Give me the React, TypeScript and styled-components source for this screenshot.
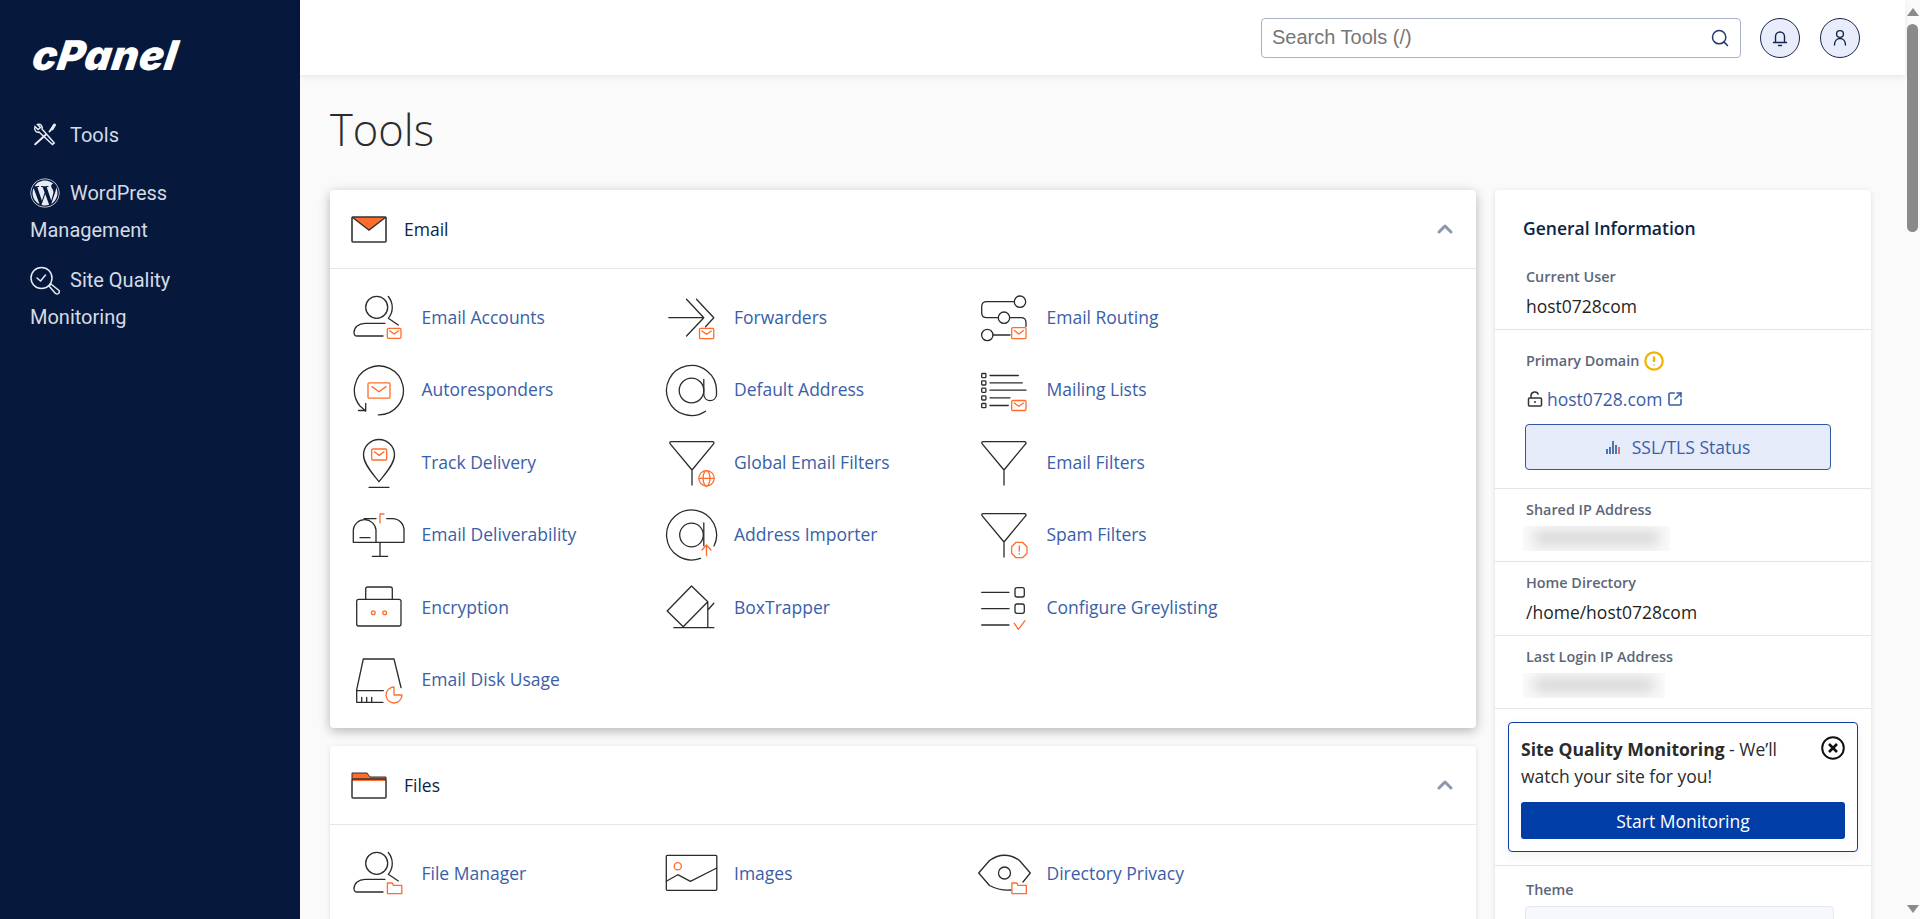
// App.tsx
import React from 'react';
import styled, { createGlobalStyle } from 'styled-components';
import { FaWordpress } from 'react-icons/fa';
import { ChevronUp, Search, SquareArrowOutUpRight } from 'lucide-react';

const GlobalStyle = createGlobalStyle`
  html, body {
    margin: 0;
    height: 100%;
    overflow: hidden;
    background: #fafafa;
    font-family: "Open Sans", "Liberation Sans", sans-serif;
  }
  #root { height: 100%; }
  * { box-sizing: border-box; }
`;

const INK = '#2b2b2b';
const ORANGE = '#ff6c2c';

const Page = styled.div`
  display: flex;
  height: 919px;
  overflow: hidden;
`;

const Sidebar = styled.aside`
  flex: 0 0 300px;
  background: #06193c;
  padding: 35px 0 0 30px;
  color: #d5dbe6;
  font-family: Roboto, "Liberation Sans", sans-serif;
`;

const Logo = styled.div`
  font-family: Inter, "Liberation Sans", sans-serif;
  font-weight: 900;
  font-style: italic;
  font-size: 41px;
  line-height: 40px;
  letter-spacing: 0.6px;
  color: #fff;
  margin-bottom: 41.5px;
  transform: skewX(-9deg);
  transform-origin: left bottom;
`;

const NavItem = styled.div<{ $gap: number }>`
  font-size: 20px;
  line-height: 37px;
  width: 200px;
  margin-bottom: ${(p) => p.$gap}px;
  svg {
    width: 30px;
    height: 30px;
    margin-right: 10px;
    vertical-align: -8px;
    color: #e8ecf2;
  }
`;

const Main = styled.div`
  flex: 1;
  min-width: 0;
  display: flex;
  flex-direction: column;
`;

const TopBar = styled.header`
  flex: 0 0 75px;
  background: #fff;
  box-shadow: 0 2px 6px rgba(0, 0, 0, 0.08);
  display: flex;
  align-items: center;
  justify-content: flex-end;
  gap: 20px;
  padding: 0 45px 0 0;
  position: relative;
`;

const SearchBox = styled.div`
  width: 480px;
  height: 40px;
  border: 1px solid #a9b2c9;
  border-radius: 4px;
  display: flex;
  align-items: center;
  padding: 0 10px;
  background: #fff;
  margin-right: -1px;
  color: #24386e;
`;

const SearchInput = styled.input`
  flex: 1;
  border: 0;
  outline: 0;
  min-width: 0;
  height: 100%;
  padding: 0;
  font-family: "Liberation Sans", Arial, sans-serif;
  font-size: 20px;
  background: transparent;
  &::placeholder {
    color: #767676;
    opacity: 1;
  }
`;

const RoundButton = styled.button`
  width: 40px;
  height: 40px;
  padding: 0;
  border-radius: 50%;
  background: #e9edfb;
  border: 1px solid #16264f;
  display: flex;
  align-items: center;
  justify-content: center;
`;

const Content = styled.main`
  flex: 1;
  min-height: 0;
  overflow: hidden;
  padding: 0 34px 0 30px;
`;

const Title = styled.h1`
  margin: 28px 0 33px;
  font-weight: 300;
  font-size: 43.5px;
  line-height: 54px;
  color: #2b2b2b;
`;

const Columns = styled.div`
  display: grid;
  grid-template-columns: 1146px 376px;
  gap: 19px;
  align-items: start;
`;

const Stack = styled.div`
  display: flex;
  flex-direction: column;
  gap: 18px;
`;

const Card = styled.section<{ $raised?: boolean }>`
  background: #fff;
  border-radius: 4px;
  box-shadow: ${(p) =>
    p.$raised ? '0 3px 12px rgba(0, 0, 0, 0.28)' : '0 1px 5px rgba(0, 0, 0, 0.12)'};
`;

const CardHeader = styled.div`
  height: 79px;
  display: flex;
  align-items: center;
  gap: 17px;
  padding: 0 19px 0 21px;
  border-bottom: 1px solid #e3e8ef;
  font-size: 17.5px;
  color: #0b2447;
`;

const CardTitle = styled.span`
  flex: 1;
`;

const ToolGrid = styled.div`
  display: grid;
  grid-template-columns: repeat(3, 312.5px);
  grid-auto-rows: 72.5px;
  padding: 11.6px 20px 12.9px;
`;

const ToolLink = styled.a`
  display: flex;
  align-items: center;
  gap: 15.5px;
  font-size: 17.5px;
  color: #3a5ea8;
  svg {
    flex: 0 0 56px;
    width: 56px;
    height: 56px;
    fill: none;
    stroke: ${INK};
    stroke-width: 1.3;
    stroke-linecap: round;
    stroke-linejoin: round;
  }
`;

const InfoHeading = styled.h2`
  margin: 0;
  padding: 26px 28px 0;
  font-size: 17.5px;
  line-height: 24px;
  font-weight: 600;
  color: #0b2447;
`;

const InfoSection = styled.div<{ $top?: number; $bottom?: number }>`
  padding: ${(p) => p.$top ?? 12}px 31px ${(p) => p.$bottom ?? 10.5}px;
  border-bottom: 1px solid #e4e4e4;
`;

const Label = styled.div`
  display: flex;
  align-items: center;
  gap: 5px;
  min-height: 18px;
  font-size: 14.4px;
  line-height: 18px;
  font-weight: 600;
  color: #5d6679;
`;

const Value = styled.div`
  margin-top: 8px;
  font-size: 17.5px;
  line-height: 24px;
  color: #1f1f1f;
`;

const DomainRow = styled.div`
  margin-top: 16px;
  display: flex;
  align-items: center;
  gap: 4px;
  height: 24px;
  font-size: 17.5px;
  color: #3a5ea8;
  margin-left: 1px;
`;

const OutlineButton = styled.button`
  margin-top: 13px;
  width: 306px;
  height: 46px;
  margin-left: -1px;
  display: flex;
  align-items: center;
  justify-content: center;
  gap: 10px;
  background: #e6ebfa;
  border: 1px solid #2f57a5;
  border-radius: 4px;
  font-family: inherit;
  font-size: 17.5px;
  color: #3a5ea8;
`;

const Blurred = styled.div<{ $w: number; $h: number }>`
  margin: 7px 0 0 -3px;
  width: ${(p) => p.$w}px;
  height: ${(p) => p.$h}px;
  background: #fafafa;
  overflow: hidden;
  display: flex;
  align-items: center;
  justify-content: center;
`;

const BlurBar = styled.div`
  width: 85%;
  height: 55%;
  background: #d4d4d4;
  filter: blur(7px);
`;

const BannerWrap = styled.div`
  padding: 13px;
  border-bottom: 1px solid #e4e4e4;
`;

const Banner = styled.div`
  border: 1px solid #0b3d9e;
  border-radius: 4px;
  padding: 13px 12px 12px;
  box-shadow: 0 4px 14px rgba(0, 0, 0, 0.06);
`;

const BannerTop = styled.div`
  display: flex;
  justify-content: space-between;
  align-items: flex-start;
`;

const BannerText = styled.div`
  width: 270px;
  font-size: 17.5px;
  line-height: 27px;
  color: #2b2b2b;
  b { font-weight: 700; }
`;

const PrimaryButton = styled.button`
  margin-top: 12px;
  width: 100%;
  height: 37px;
  background: #003da6;
  border: 0;
  border-radius: 3px;
  color: #fff;
  font-family: inherit;
  font-size: 17.5px;
`;

const ThemeSelect = styled.div`
  margin: 7px 0 0 -1px;
  width: 309px;
  height: 44px;
  background: #f6f8fc;
  border: 1px solid #e3e8f3;
  border-radius: 4px;
`;

const ScrollRail = styled.div`
  flex: 0 0 15px;
  background: #fafafa;
  display: flex;
  flex-direction: column;
  align-items: center;
  padding: 8px 0 6px;
`;

const ScrollThumb = styled.div`
  width: 11px;
  height: 208px;
  margin-top: 8px;
  background: #8a8a8a;
  border-radius: 6px;
`;

const RailGap = styled.div`
  flex: 1;
`;

// mail / folder badges used inside the tool icons
const Mail = ({ x, y, w, h }: { x: number; y: number; w: number; h: number }) => (
  <g stroke={ORANGE}>
    <rect x={x} y={y} width={w} height={h} rx={1.2} />
    <path d={`M${x + w * 0.18} ${y + h * 0.25}L${x + w / 2} ${y + h * 0.58}L${x + w * 0.82} ${y + h * 0.25}`} />
  </g>
);

const Folder = ({ x, y }: { x: number; y: number }) => (
  <path stroke={ORANGE} d={`M${x} ${y + 10.7}V${y}h5l1 2.4h8.4v8.3z`} />
);

const Person = () => (
  <>
    <circle cx={26.7} cy={18.3} r={11} />
    <path d="M38.3 7.5C43.6 14 43.6 23 38.3 29.3L48.3 36" />
    <path d="M35 34.3H15C8.5 34.3 4 38.5 4 43.5C4 46 5.3 47 7 47H33" />
  </>
);

const Funnel = () => (
  <path d="M8 7.7H49.5C50.8 7.7 51.4 8.8 50.6 9.8L29 36L7.2 9.8C6.4 8.8 6.8 7.7 8 7.7ZM29 36V51" />
);

const icons: Record<string, React.ReactNode> = {
  accounts: (
    <>
      <Person />
      <Mail x={37.3} y={39.3} w={13.7} h={10} />
    </>
  ),
  forwarders: (
    <>
      <path d="M5.8 28.7H40.8M23.5 10.3L40.8 28.7L23.5 47M33.5 10.3L50.8 28.7L42.5 37.7" />
      <Mail x={36.5} y={39.3} w={14.3} h={10.4} />
    </>
  ),
  routing: (
    <>
      <circle cx={45} cy={12.7} r={5.7} />
      <circle cx={29} cy={28.7} r={5.7} />
      <circle cx={12.3} cy={46} r={5.7} />
      <path d="M39.3 12.7H11.7Q6.7 12.7 6.7 17.7V23.7Q6.7 28.7 11.7 28.7H23.3M34.7 28.7H46Q51 28.7 51 33.7V37.5M18 46H35" />
      <Mail x={36.7} y={38.7} w={14.3} h={11} />
    </>
  ),
  auto: (
    <>
      <path d="M28.3 53.9A24.5 24.5 0 1 0 10 45L15.7 50" />
      <path d="M8.5 49.5H15.7V42.5" />
      <Mail x={18} y={21.8} w={22} h={15.4} />
    </>
  ),
  at: (
    <>
      <circle cx={28.5} cy={29.5} r={12.3} />
      <path d="M42.5 50.2A25 25 0 1 1 53.5 29.5V34A6.4 6.4 0 0 1 40.8 34V18.5" />
    </>
  ),
  lists: (
    <>
      <g>
        {[14.5, 21.8, 29.2, 36.8, 44.5].map((y) => (
          <rect key={y} x={6.7} y={y - 2} width={4.2} height={4.2} rx={0.8} />
        ))}
      </g>
      <path d="M15 14.5H43.3M15 21.8H47.3M15 29.2H51M15 36.8H35M15 44.5H33.3" />
      <Mail x={36.7} y={39.5} w={14.3} h={10} />
    </>
  ),
  track: (
    <>
      <path d="M29 47.7C24 41 13.5 30.5 13.5 21A15.5 15.5 0 0 1 44.5 21C44.5 30.5 34 41 29 47.7ZM19 53.3H39" />
      <Mail x={21.7} y={15} w={15} h={11} />
    </>
  ),
  globalFilter: (
    <>
      <Funnel />
      <g stroke={ORANGE}>
        <circle cx={43.5} cy={44.3} r={7.7} />
        <ellipse cx={43.5} cy={44.3} rx={3.4} ry={7.7} />
        <path d="M36 44.3H51" />
      </g>
    </>
  ),
  filter: <Funnel />,
  deliver: (
    <>
      <path d="M3.3 36.3H54M3.3 36.3V24A11.4 11.4 0 0 1 26 24V36.3M14 12.6H26M36.7 12.6H42.6A11.4 11.4 0 0 1 54 24V36.3M10 31.7H20M30 36.3V50.3M22.3 50.3H37.7" />
      <path stroke={ORANGE} d="M30 17V8H34" />
    </>
  ),
  importer: (
    <>
      <circle cx={28.5} cy={29} r={11.8} />
      <path d="M37.5 52.3A25 25 0 1 1 51 40M40.8 17V39.7" />
      <path stroke={ORANGE} d="M43.5 49.7V39.5M39 44L43.5 39L48 44" />
    </>
  ),
  spam: (
    <>
      <Funnel />
      <g stroke={ORANGE}>
        <path d="M41 36.3H47.5L52 40.8V47.2L47.5 51.7H41L36.6 47.2V40.8Z" />
        <path d="M44.3 40V45M44.3 47.6V48" />
      </g>
    </>
  ),
  encrypt: (
    <>
      <rect x={6.7} y={20.3} width={44.3} height={26.7} rx={2} />
      <path d="M15.7 20.3V10Q15.7 8 17.7 8H40.3Q42.3 8 42.3 10V20.3" />
      <g stroke={ORANGE}>
        <circle cx={23.3} cy={33.7} r={1.9} />
        <circle cx={34.7} cy={33.7} r={1.9} />
      </g>
    </>
  ),
  trapper: (
    <path d="M28.5 7L44.8 22.7L20.2 47.7L4.2 32ZM44.8 22.7V48.7M44.8 31L50.8 24.3M10.8 48.7H50.8" />
  ),
  grey: (
    <>
      <path d="M6.7 13.3H34M6.7 29.7H34M6.7 46H34" />
      <rect x={40} y={8.7} width={9.3} height={9.3} rx={2} />
      <rect x={40} y={25} width={9.3} height={9.3} rx={2} />
      <path stroke={ORANGE} d="M39.3 44.3L43.3 50.3L50 41.7" />
    </>
  ),
  disk: (
    <>
      <path d="M51 36.5L44 8H13.3L6.7 38.7V51.3H33M6.7 39.7H33.3M11.7 46.3V51.3M16.7 46.3V51.3M21.7 46.3V51.3" />
      <path stroke={ORANGE} d="M44 36A8 8 0 1 0 52 44H44Z" />
    </>
  ),
  files: (
    <>
      <Person />
      <Folder x={37.4} y={38} />
    </>
  ),
  images: (
    <>
      <rect x={3.3} y={10.3} width={50.5} height={35} rx={1} />
      <path d="M3.3 36.3L14.8 29.7L27.4 36.3L53.8 23" />
      <circle stroke={ORANGE} cx={14.8} cy={21.3} r={3.6} />
    </>
  ),
  privacy: (
    <>
      <path d="M3.7 28L14.5 15.5Q29.5 5 44.5 15.5L55.3 28L48 37M36 45Q25 46 14.5 40.5L3.7 28" />
      <circle cx={29.5} cy={28} r={6} />
      <Folder x={36.9} y={38} />
    </>
  ),
};

const emailTools: [string, string][] = [
  ['Email Accounts', 'accounts'],
  ['Forwarders', 'forwarders'],
  ['Email Routing', 'routing'],
  ['Autoresponders', 'auto'],
  ['Default Address', 'at'],
  ['Mailing Lists', 'lists'],
  ['Track Delivery', 'track'],
  ['Global Email Filters', 'globalFilter'],
  ['Email Filters', 'filter'],
  ['Email Deliverability', 'deliver'],
  ['Address Importer', 'importer'],
  ['Spam Filters', 'spam'],
  ['Encryption', 'encrypt'],
  ['BoxTrapper', 'trapper'],
  ['Configure Greylisting', 'grey'],
  ['Email Disk Usage', 'disk'],
];

const fileTools: [string, string][] = [
  ['File Manager', 'files'],
  ['Images', 'images'],
  ['Directory Privacy', 'privacy'],
];

const Tools = ({ items }: { items: [string, string][] }) => (
  <ToolGrid>
    {items.map(([label, icon]) => (
      <ToolLink key={label}>
        <svg viewBox="0 0 56 56">{icons[icon]}</svg>
        {label}
      </ToolLink>
    ))}
  </ToolGrid>
);

const App: React.FC = () => (
  <>
    <GlobalStyle />
    <Page>
      <Sidebar>
        <Logo>cPanel</Logo>
        <NavItem $gap={21}>
          <svg viewBox="0 0 30 30" fill="none" stroke="currentColor" strokeWidth={2} strokeLinecap="round">
            <path d="M5 6.5L8 9.5L10.5 7.5L7.5 4.5C10.5 3.5 13 6 12 9L24.3 23L22.5 24.5L9 12C6 13 3.8 10 5 6.5Z" strokeWidth={1.4} />
            <path d="M24 5.5L19.5 11.5M15.5 15L5.2 24.3" />
            <path d="M24.5 5L22 9" strokeWidth={3} />
          </svg>
          Tools
        </NavItem>
        <NavItem $gap={13}>
          <FaWordpress />
          WordPress Management
        </NavItem>
        <NavItem $gap={0}>
          <svg viewBox="0 0 30 30" fill="none" stroke="currentColor" strokeWidth={1.5} strokeLinecap="round" strokeLinejoin="round">
            <circle cx={11.5} cy={13} r={10.5} />
            <path d="M7 13L10.5 16L15.5 10" />
            <path d="M19 21L21 19L29 25.5Q30 27 28.5 28.5Q27 29.5 25.5 28.5Z" />
          </svg>
          Site Quality Monitoring
        </NavItem>
      </Sidebar>
      <Main>
        <TopBar>
          <SearchBox>
            <SearchInput placeholder="Search Tools (/)" readOnly />
            <Search size={20} strokeWidth={1.8} />
          </SearchBox>
          <RoundButton>
            <svg width="20" height="20" viewBox="0 0 20 20" fill="none" stroke="#16264f" strokeWidth={1.4} strokeLinecap="round">
              <path d="M3.5 14.5H16.5M5.5 14.5V8.5A4.5 4.5 0 0 1 14.5 8.5V14.5M8.5 17.5H11.5" />
            </svg>
          </RoundButton>
          <RoundButton>
            <svg width="20" height="20" viewBox="0 0 20 20" fill="none" stroke="#16264f" strokeWidth={1.4} strokeLinecap="round">
              <circle cx={10} cy={6} r={3.4} />
              <path d="M4.5 17C4.5 13 7 10.5 10 10.5C13 10.5 15.5 13 15.5 17" />
            </svg>
          </RoundButton>
        </TopBar>
        <Content>
          <Title>Tools</Title>
          <Columns>
            <Stack>
              <Card $raised>
                <CardHeader>
                  <svg width="36" height="27" viewBox="0 0 36 27" fill="none">
                    <path d="M1 1H35L18 14Z" fill={ORANGE} />
                    <rect x={1} y={1} width={34} height={25} rx={1} stroke="#333" strokeWidth={1.6} />
                    <path d="M1 1L18 14L35 1" stroke="#333" strokeWidth={1.4} />
                  </svg>
                  <CardTitle>Email</CardTitle>
                  <ChevronUp size={24} color="#8a97ad" strokeWidth={3} />
                </CardHeader>
                <Tools items={emailTools} />
              </Card>
              <Card>
                <CardHeader>
                  <svg width="36" height="27" viewBox="0 0 36 27" fill="none">
                    <path d="M1 1H16L19 5H35V9H1Z" fill={ORANGE} />
                    <rect x={1} y={7} width={34} height={19} rx={1} stroke="#333" strokeWidth={1.5} />
                    <path d="M1 7V1H16L19 5H35V7" stroke="#333" strokeWidth={1} />
                  </svg>
                  <CardTitle>Files</CardTitle>
                  <ChevronUp size={24} color="#8a97ad" strokeWidth={3} />
                </CardHeader>
                <Tools items={fileTools} />
              </Card>
            </Stack>
            <Card>
              <InfoHeading>General Information</InfoHeading>
              <InfoSection $top={28}>
                <Label>Current User</Label>
                <Value>host0728com</Value>
              </InfoSection>
              <InfoSection $top={21} $bottom={18}>
                <Label>
                  Primary Domain
                  <svg width="20" height="20" viewBox="0 0 20 20" fill="none" stroke="#f0b400">
                    <circle cx={10} cy={10} r={8.7} strokeWidth={2.2} />
                    <path d="M10 5.5V11M10 13.8V14.5" strokeWidth={2.4} />
                  </svg>
                </Label>
                <DomainRow>
                  <svg width="16" height="16" viewBox="0 0 16 16" fill="none" stroke="#333" strokeWidth={1.5}>
                    <rect x={1.5} y={7} width={13} height={8} rx={1} />
                    <path d="M4 7V4.5A3.8 3.8 0 0 1 11.4 3.5" />
                    <path d="M8 10V12" />
                  </svg>
                  host0728.com
                  <SquareArrowOutUpRight size={16} strokeWidth={2.4} />
                </DomainRow>
                <OutlineButton>
                  <svg width="16" height="16" viewBox="0 0 16 16" fill="none" strokeWidth={2}>
                    <path d="M1 15V10M4 15V8M7 15V2M10 15V6" stroke="#4a76b5" />
                    <path d="M13 15V8" stroke="#d9775a" />
                  </svg>
                  SSL/TLS Status
                </OutlineButton>
              </InfoSection>
              <InfoSection>
                <Label>Shared IP Address</Label>
                <Blurred $w={147} $h={25}>
                  <BlurBar />
                </Blurred>
              </InfoSection>
              <InfoSection>
                <Label>Home Directory</Label>
                <Value>/home/host0728com</Value>
              </InfoSection>
              <InfoSection>
                <Label>Last Login IP Address</Label>
                <Blurred $w={142} $h={25}>
                  <BlurBar />
                </Blurred>
              </InfoSection>
              <BannerWrap>
                <Banner>
                  <BannerTop>
                    <BannerText>
                      <b>Site Quality Monitoring</b> - We&rsquo;ll
                      <br />
                      watch your site for you!
                    </BannerText>
                    <svg width="24" height="24" viewBox="0 0 24 24" fill="none" stroke="#111">
                      <circle cx={12} cy={12} r={10.8} strokeWidth={2} />
                      <path d="M8 8L16 16M16 8L8 16" strokeWidth={2.6} />
                    </svg>
                  </BannerTop>
                  <PrimaryButton>Start Monitoring</PrimaryButton>
                </Banner>
              </BannerWrap>
              <InfoSection $top={15}>
                <Label>Theme</Label>
                <ThemeSelect />
              </InfoSection>
            </Card>
          </Columns>
        </Content>
      </Main>
      <ScrollRail>
        <svg width="12" height="8" viewBox="0 0 12 8">
          <path d="M6 0L12 8H0Z" fill="#8a8a8a" />
        </svg>
        <ScrollThumb />
        <RailGap />
        <svg width="12" height="8" viewBox="0 0 12 8">
          <path d="M6 8L12 0H0Z" fill="#8a8a8a" />
        </svg>
      </ScrollRail>
    </Page>
  </>
);

export default App;
